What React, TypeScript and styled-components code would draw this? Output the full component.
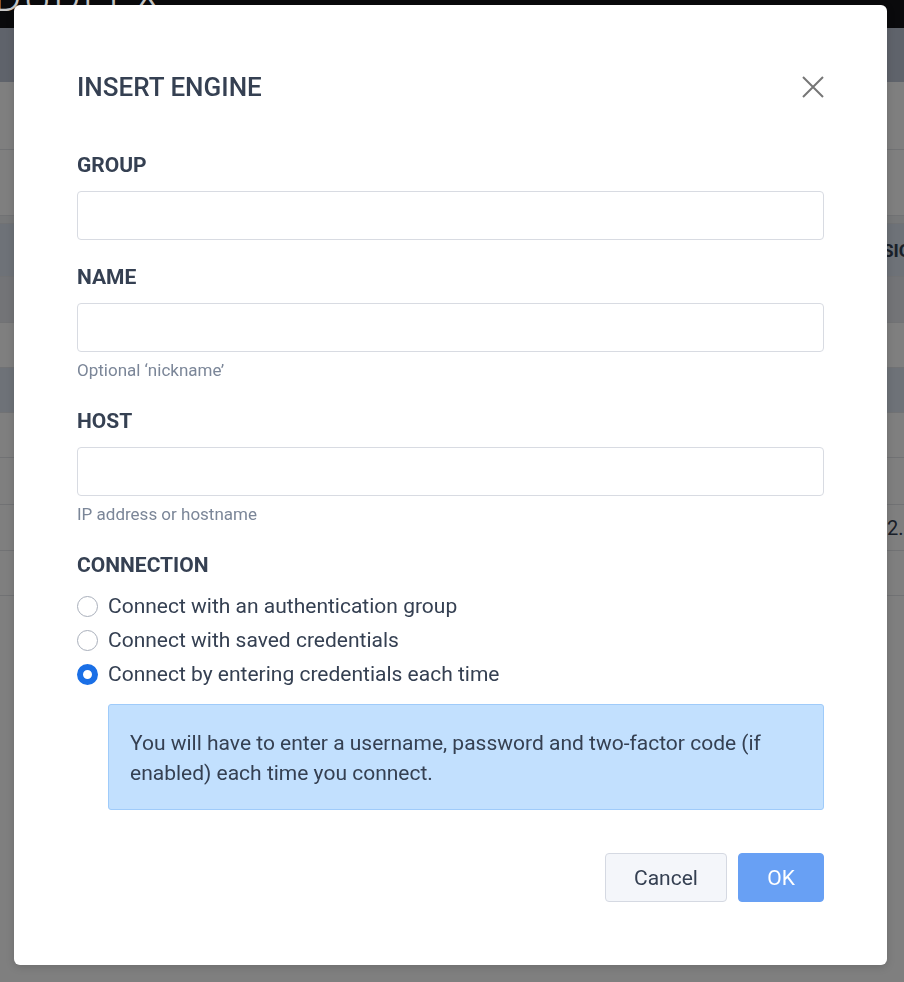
import React, { useState } from "react";
import styled, { createGlobalStyle } from "styled-components";

const GlobalStyle = createGlobalStyle`
  html, body {
    margin: 0;
    padding: 0;
    overflow: hidden;
  }
  body {
    font-family: Roboto, "Noto Sans", "Liberation Sans", sans-serif;
    color: #354052;
    background: #ffffff;
  }
  * {
    box-sizing: border-box;
  }
`;

/* ---------- page behind the dialog ---------- */

const Page = styled.div`
  min-height: 100vh;
  background: #ffffff;
`;

const TopBar = styled.div`
  position: relative;
  z-index: 11;
  height: 28px;
  background: #0a0a0c;
  overflow: hidden;
`;

const Brand = styled.div`
  font-size: 42px;
  line-height: 42px;
  font-weight: 300;
  margin-top: -24px;
  margin-left: -6px;
  color: #c8c8c8;
  letter-spacing: 2px;
  white-space: nowrap;
`;

const SubBar = styled.div`
  height: 54px;
  background: #bec6d6;
`;

const Row = styled.div<{ h: number; tone?: "white" | "blue" | "blueDark" | "line" }>`
  display: grid;
  grid-template-columns: 1fr 55px;
  align-items: center;
  height: ${({ h }) => h}px;
  background: ${({ tone }) =>
    tone === "blue" ? "#dce4f0" : tone === "blueDark" ? "#e6e9ee" : tone === "line" ? "#eef0f3" : "#ffffff"};
  border-bottom: 1px solid #e2e4e8;
`;

const Cell = styled.div<{ bold?: boolean; indent?: number }>`
  white-space: nowrap;
  font-size: ${({ bold }) => (bold ? "18px" : "20px")};
  font-weight: ${({ bold }) => (bold ? 700 : 400)};
  padding-left: ${({ indent }) => indent ?? 0}px;
  color: #354052;
`;

/* ---------- dialog ---------- */

const Backdrop = styled.div`
  position: fixed;
  inset: 0;
  z-index: 10;
  background: rgba(0, 0, 0, 0.5);
`;

const Overlay = styled.div`
  position: fixed;
  inset: 0;
  z-index: 12;
  display: flex;
  align-items: flex-start;
  padding: 5px 17px 0 14px;
`;

const Modal = styled.div`
  width: 873px;
  background: #ffffff;
  border-radius: 6px;
  padding: 0 63px 63px;
  box-shadow: 0 2px 8px rgba(0, 0, 0, 0.15);
`;

const Header = styled.div`
  display: flex;
  align-items: center;
  justify-content: space-between;
  height: 50px;
  margin-top: 57px;
  margin-bottom: 41px;
`;

const Title = styled.h2`
  margin: 0;
  font-size: 26px;
  font-weight: 500;
  color: #354052;
`;

const CloseButton = styled.button`
  display: flex;
  align-items: center;
  justify-content: center;
  width: 22px;
  height: 22px;
  padding: 0;
  border: none;
  background: transparent;
  cursor: pointer;
`;

const Field = styled.div`
  display: flex;
  flex-direction: column;
  margin-bottom: 25px;
`;

const Label = styled.label`
  display: block;
  font-size: 21px;
  line-height: 24px;
  font-weight: 700;
  color: #354052;
  margin-bottom: 14px;
`;

const SectionLabel = styled(Label).attrs({ as: "div" })`
  margin-bottom: 12px;
`;

const Input = styled.input`
  height: 49px;
  width: 100%;
  border: 1px solid #d8dbe2;
  border-radius: 4px;
  padding: 0 14px;
  font-family: inherit;
  font-size: 18px;
  color: #354052;
  outline: none;
`;

const Hint = styled.div`
  font-size: 17px;
  line-height: 21px;
  color: #7b8698;
  margin-top: 8px;
  padding-bottom: 3px;
`;

const RadioGroup = styled.div`
  display: flex;
  flex-direction: column;
`;

const RadioRow = styled.label`
  display: flex;
  align-items: center;
  height: 34px;
  gap: 10px;
  font-size: 21px;
  color: #354052;
  cursor: pointer;
`;

const RadioDot = styled.span<{ checked: boolean }>`
  flex: none;
  width: 21px;
  height: 21px;
  border-radius: 50%;
  background: #ffffff;
  border: ${({ checked }) => (checked ? "6.5px solid #1a6fe6" : "1px solid #a9afbb")};
`;

const InfoBox = styled.div`
  margin: 13px 0 0 31px;
  padding: 23px 21px 21px;
  background: #c2e0fe;
  border: 1px solid #9fcbfa;
  border-radius: 3px;
  font-size: 21px;
  line-height: 30px;
  color: #354052;
`;

const Footer = styled.div`
  display: flex;
  justify-content: flex-end;
  gap: 11px;
  margin-top: 43px;
`;

const Button = styled.button<{ primary?: boolean }>`
  height: 49px;
  min-width: ${({ primary }) => (primary ? "86px" : "122px")};
  padding: 0 20px;
  border-radius: 4px;
  font-family: inherit;
  font-size: 21px;
  cursor: pointer;
  border: 1px solid ${({ primary }) => (primary ? "#68a0f4" : "#d5d9e2")};
  background: ${({ primary }) => (primary ? "#68a0f4" : "#f4f6fa")};
  color: ${({ primary }) => (primary ? "#ffffff" : "#354052")};
`;

const options = [
  "Connect with an authentication group",
  "Connect with saved credentials",
  "Connect by entering credentials each time",
];

const App = () => {
  const [connection, setConnection] = useState(2);

  return (
    <>
      <GlobalStyle />
      <Page>
        <TopBar>
          <Brand>DUDEEX</Brand>
        </TopBar>
        <SubBar />
        <Row h={68} />
        <Row h={66} />
        <Row h={8} tone="line" />
        <Row h={53} tone="blue">
          <span />
          <Cell bold>VERSION</Cell>
        </Row>
        <Row h={46} tone="blueDark" />
        <Row h={45} />
        <Row h={45} tone="blue" />
        <Row h={45} />
        <Row h={47} />
        <Row h={46}>
          <span />
          <Cell indent={38}>2.0.1</Cell>
        </Row>
        <Row h={45} />
      </Page>
      <Backdrop />
      <Overlay>
        <Modal>
          <Header>
            <Title>INSERT ENGINE</Title>
            <CloseButton aria-label="Close">
              <svg width="22" height="22" viewBox="0 0 22 22">
                <path d="M1 1 L21 21 M21 1 L1 21" stroke="#767676" strokeWidth="2" fill="none" />
              </svg>
            </CloseButton>
          </Header>

          <Field>
            <Label>GROUP</Label>
            <Input />
          </Field>

          <Field>
            <Label>NAME</Label>
            <Input />
            <Hint>Optional ‘nickname’</Hint>
          </Field>

          <Field>
            <Label>HOST</Label>
            <Input />
            <Hint>IP address or hostname</Hint>
          </Field>

          <SectionLabel>CONNECTION</SectionLabel>
          <RadioGroup>
            {options.map((text, i) => (
              <RadioRow key={text} onClick={() => setConnection(i)}>
                <RadioDot checked={connection === i} />
                {text}
              </RadioRow>
            ))}
          </RadioGroup>

          <InfoBox>
            You will have to enter a username, password and two-factor code (if enabled) each time you
            connect.
          </InfoBox>

          <Footer>
            <Button>Cancel</Button>
            <Button primary>OK</Button>
          </Footer>
        </Modal>
      </Overlay>
    </>
  );
};

export default App;
